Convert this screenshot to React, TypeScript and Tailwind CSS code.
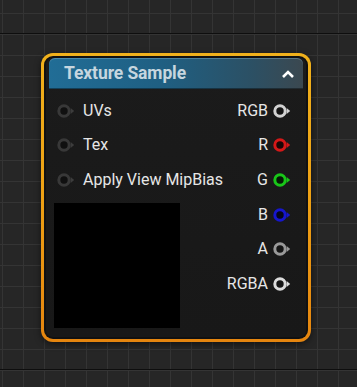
import React from 'react';

type PinProps = { ring: string; fill: string; arrow: string };

function Pin({ ring, fill, arrow }: PinProps) {
  return (
    <svg width="18" height="14" viewBox="0 0 18 14" className="shrink-0">
      <circle cx="7" cy="7" r="5.2" fill={fill} stroke={ring} strokeWidth="3" />
      <path d="M13.6 4 L17.2 7 L13.6 10 Z" fill={arrow} />
    </svg>
  );
}

const inputs = ['UVs', 'Tex', 'Apply View MipBias'];

const outputs = [
  { label: 'RGB', ring: '#d2d2d2', fill: '#151515', arrow: '#d2d2d2' },
  { label: 'R', ring: '#d41818', fill: '#1a0606', arrow: '#d41818' },
  { label: 'G', ring: '#19c619', fill: '#061a06', arrow: '#19c619' },
  { label: 'B', ring: '#1616cc', fill: '#06061a', arrow: '#1616cc' },
  { label: 'A', ring: '#9a9a9a', fill: '#151515', arrow: '#9a9a9a' },
  { label: 'RGBA', ring: '#dcdcdc', fill: '#151515', arrow: '#dcdcdc' },
];

export default function App() {
  return (
    <div
      className="w-[357px] h-[387px] overflow-hidden bg-[#262626] bg-[linear-gradient(to_bottom,transparent_33px,#0e0e0e_33px,#0e0e0e_34px,transparent_34px),linear-gradient(to_right,#343434_1px,transparent_1px),linear-gradient(to_bottom,#343434_1px,transparent_1px)] bg-size-[100%_336px,21px_21px,21px_21px] bg-position-[0_0,2px_0,0_13px] pt-[53px] pl-[41px] font-['Roboto',sans-serif]"
    >
      <div className="w-[270px] h-[289px] rounded-[12px] p-[3px] bg-[linear-gradient(to_bottom,#f0b11c,#eea114_50%,#e5850f)] shadow-[0_2px_6px_rgba(0,0,0,0.5)]">
        <div className="w-full h-full rounded-[9px] bg-[#111111] p-[2px] flex flex-col">
          <div className="h-full rounded-[7px] bg-[linear-gradient(to_bottom,#1b1b1b,#181818)] flex flex-col px-[2px]">
            <div className="h-[31px] mx-[1px] rounded-t-[6px] bg-[linear-gradient(to_right,#216d96,#1f5f82_45%,#2c5064_80%,#3b4850)] shadow-[inset_0_1px_0_rgba(150,200,230,0.35),inset_0_-1px_0_rgba(0,0,0,0.4)] flex items-center justify-between pl-[15px] pr-[8px]">
              <span className="text-[17.5px] font-bold text-[#c6d6df] tracking-[-0.1px]">Texture Sample</span>
              <svg width="14" height="10" viewBox="0 0 14 10">
                <path d="M2 8 L7 3 L12 8" fill="none" stroke="#ffffff" strokeWidth="2.6" />
              </svg>
            </div>
            <div className="flex justify-between pl-[6px] pr-[13px] pt-[4.5px]">
              <div className="flex flex-col">
                {inputs.map((name) => (
                  <div key={name} className="h-[34.6px] flex items-center">
                    <div className="ml-[3px] mr-[8px]">
                      <Pin ring="#383838" fill="#101010" arrow="#3c3c3c" />
                    </div>
                    <span className="text-[16px] text-[#e6e6e6] leading-none">{name}</span>
                  </div>
                ))}
                <div className="mt-[6px] w-[126px] h-[125px] bg-black" />
              </div>
              <div className="flex flex-col items-end">
                {outputs.map((o) => (
                  <div key={o.label} className="h-[34.6px] flex items-center">
                    <span className="text-[16px] text-[#e6e6e6] leading-none mr-[5px]">{o.label}</span>
                    <Pin ring={o.ring} fill={o.fill} arrow={o.arrow} />
                  </div>
                ))}
              </div>
            </div>
          </div>
        </div>
      </div>
    </div>
  );
}
